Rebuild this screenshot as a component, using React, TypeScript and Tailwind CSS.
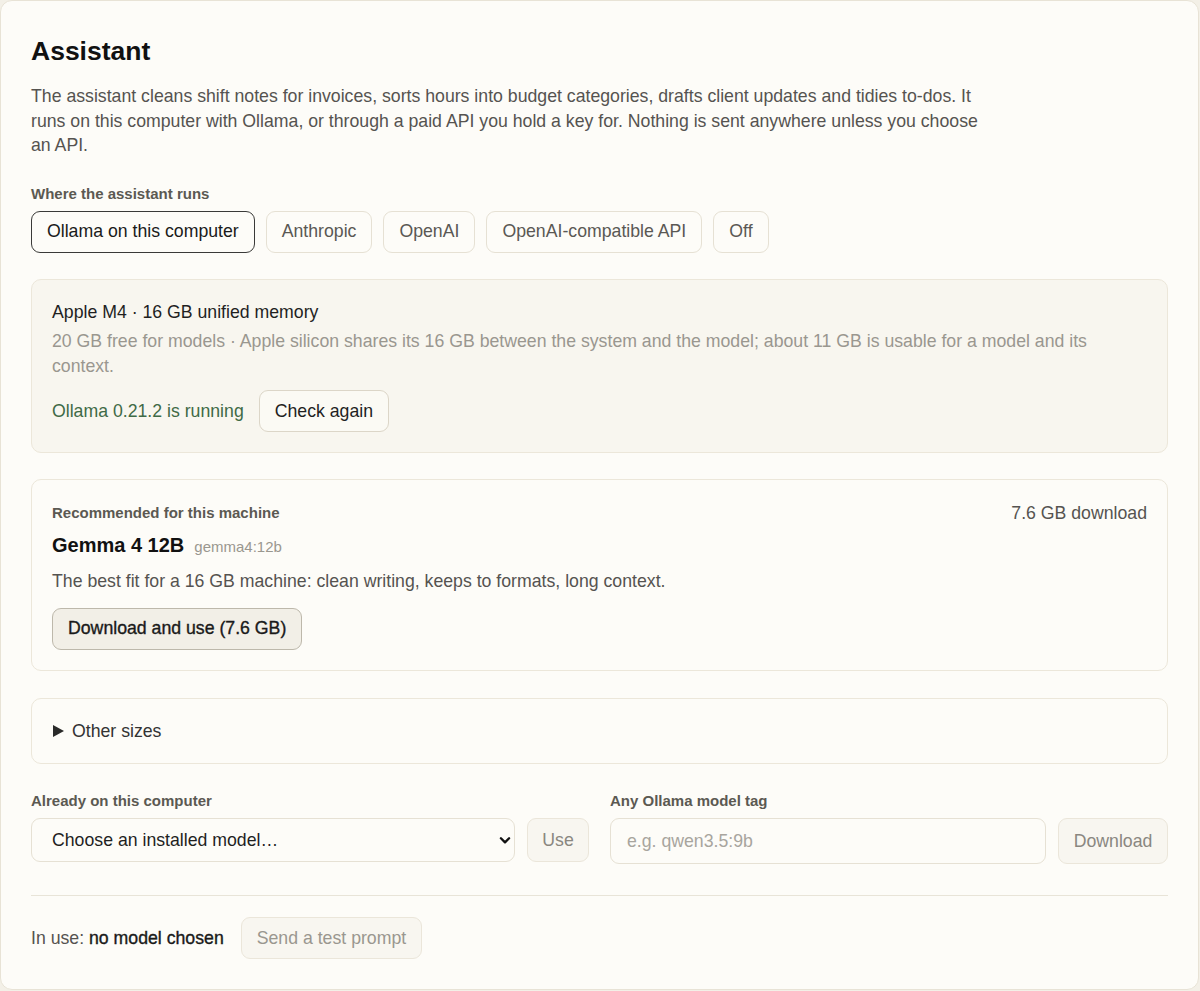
import React from "react";

const tabs = ["Ollama on this computer", "Anthropic", "OpenAI", "OpenAI-compatible API", "Off"];

export default function App() {
  return (
    <div
      className="min-h-screen bg-[#f3f0e7] text-[#1f1f1f]"
      style={{ fontFamily: '"Liberation Sans", Arial, sans-serif' }}
    >
      <div className="w-[1199px] h-[990px] rounded-[12px] border border-[#e8e3d6] bg-[#fdfcf8] px-[30px] pt-[34px]">
        <h1 className="text-[26.5px] leading-8 font-bold text-[#111]">Assistant</h1>
        <p className="mt-[17px] max-w-[958px] text-[17.7px] leading-[24.5px] text-[#555350]">
          The assistant cleans shift notes for invoices, sorts hours into budget categories, drafts client updates and
          tidies to-dos. It runs on this computer with Ollama, or through a paid API you hold a key for. Nothing is sent
          anywhere unless you choose an API.
        </p>

        <div className="mt-[26px] text-[15px] leading-5 font-bold text-[#5b5952]">Where the assistant runs</div>
        <div className="mt-[7px] flex gap-[11px]">
          {tabs.map((t, i) => (
            <button
              key={t}
              className={
                i === 0
                  ? "h-[42px] px-[15px] rounded-[9px] border border-[#3a3a38] bg-[#fdfcf8] text-[17.7px] text-[#1a1a1a]"
                  : "h-[42px] px-[15px] rounded-[9px] border border-[#e6e1d4] bg-[#fdfcf8] text-[17.7px] text-[#5a5854]"
              }
            >
              {t}
            </button>
          ))}
        </div>

        <div className="mt-[26px] rounded-[10px] border border-[#ece7da] bg-[#f8f6ef] px-[20px] pt-[20px] pb-[20px]">
          <div className="text-[17.7px] leading-[24.5px] text-[#1f1f1f]">Apple M4 · 16 GB unified memory</div>
          <div className="mt-[5px] text-[17.7px] leading-[25px] text-[#9a978f]">
            20 GB free for models · Apple silicon shares its 16 GB between the system and the model; about 11 GB is
            usable for a model and its context.
          </div>
          <div className="mt-[11px] flex items-center gap-[15px]">
            <span className="text-[17.7px] text-[#3f6a46]">Ollama 0.21.2 is running</span>
            <button className="h-[42px] px-[15px] rounded-[9px] border border-[#dcd6c8] bg-[#fbfaf4] text-[17.7px] text-[#1f1f1f]">
              Check again
            </button>
          </div>
        </div>

        <div className="mt-[26px] rounded-[10px] border border-[#ece7da] bg-[#fdfcf8] px-[20px] pt-[23px] pb-[20px]">
          <div className="flex items-center justify-between">
            <span className="text-[15px] leading-5 font-bold text-[#5b5952]">Recommended for this machine</span>
            <span className="text-[17.7px] leading-5 text-[#555350]">7.6 GB download</span>
          </div>
          <div className="mt-[9px] flex items-baseline gap-[10px] leading-[26px]">
            <span className="text-[20px] font-bold text-[#111]">Gemma 4 12B</span>
            <span className="text-[15px] text-[#9a978f]">gemma4:12b</span>
          </div>
          <div className="mt-[9px] text-[17.7px] leading-[24.5px] text-[#555350]">
            The best fit for a 16 GB machine: clean writing, keeps to formats, long context.
          </div>
          <button className="mt-[14px] h-[42px] px-[15px] rounded-[9px] border border-[#bdb8ab] bg-[#f2efe7] text-[17.7px] text-[#1a1a1a] [-webkit-text-stroke:0.35px_#1a1a1a]">
            Download and use (7.6 GB)
          </button>
        </div>

        <div className="mt-[27px] rounded-[10px] border border-[#ece7da] bg-[#fdfcf8] px-[20px] py-[20px]">
          <div className="flex items-center gap-[8px] text-[17.7px] leading-[24.5px] text-[#333]">
            <svg width="11" height="12" viewBox="0 0 11 12" className="ml-[1px]">
              <path d="M0 0 L11 6 L0 12 Z" fill="#2a2a2a" />
            </svg>
            <span>Other sizes</span>
          </div>
        </div>

        <div className="mt-[27px] grid grid-cols-2 gap-[21px]">
          <div>
            <div className="text-[15px] leading-5 font-bold text-[#5b5952]">Already on this computer</div>
            <div className="mt-[7px] flex gap-[12px]">
              <div className="relative flex-1">
                <select
                  className="w-full h-[44px] appearance-none rounded-[9px] border border-[#e6e1d4] bg-[#fdfcf8] pl-[20px] pr-[30px] text-[17.7px] text-[#1f1f1f] outline-none"
                  defaultValue=""
                >
                  <option value="">Choose an installed model…</option>
                </select>
                <svg
                  width="14"
                  height="14"
                  viewBox="0 0 24 24"
                  className="pointer-events-none absolute right-[3px] top-[15px]"
                >
                  <path d="M5 9 L12 16 L19 9" fill="none" stroke="#111" strokeWidth="4" strokeLinecap="round" strokeLinejoin="round" />
                </svg>
              </div>
              <button className="h-[44px] w-[62px] rounded-[9px] border border-[#ebe6da] bg-[#f8f6f0] text-[17.7px] text-[#8a8780]">
                Use
              </button>
            </div>
          </div>
          <div>
            <div className="text-[15px] leading-5 font-bold text-[#5b5952]">Any Ollama model tag</div>
            <div className="mt-[7px] flex gap-[12px]">
              <input
                placeholder="e.g. qwen3.5:9b"
                className="flex-1 min-w-0 h-[46px] rounded-[9px] border border-[#e6e1d4] bg-[#fdfcf8] pl-[16px] text-[17.7px] text-[#1f1f1f] placeholder:text-[#a8a59e] outline-none"
              />
              <button className="h-[46px] w-[110px] rounded-[9px] border border-[#ebe6da] bg-[#f8f6f0] text-[17.7px] text-[#8a8780]">
                Download
              </button>
            </div>
          </div>
        </div>

        <div className="mt-[31px] h-px bg-[#e8e4d8]" />

        <div className="mt-[21px] flex items-center gap-[17px]">
          <span className="text-[17.7px] text-[#555350]">
            In use: <span className="text-[#1a1a1a] [-webkit-text-stroke:0.35px_#1a1a1a]">no model chosen</span>
          </span>
          <button className="h-[42px] px-[15px] rounded-[9px] border border-[#ebe6da] bg-[#f8f6f0] text-[17.7px] text-[#9a978f]">
            Send a test prompt
          </button>
        </div>
      </div>
    </div>
  );
}
